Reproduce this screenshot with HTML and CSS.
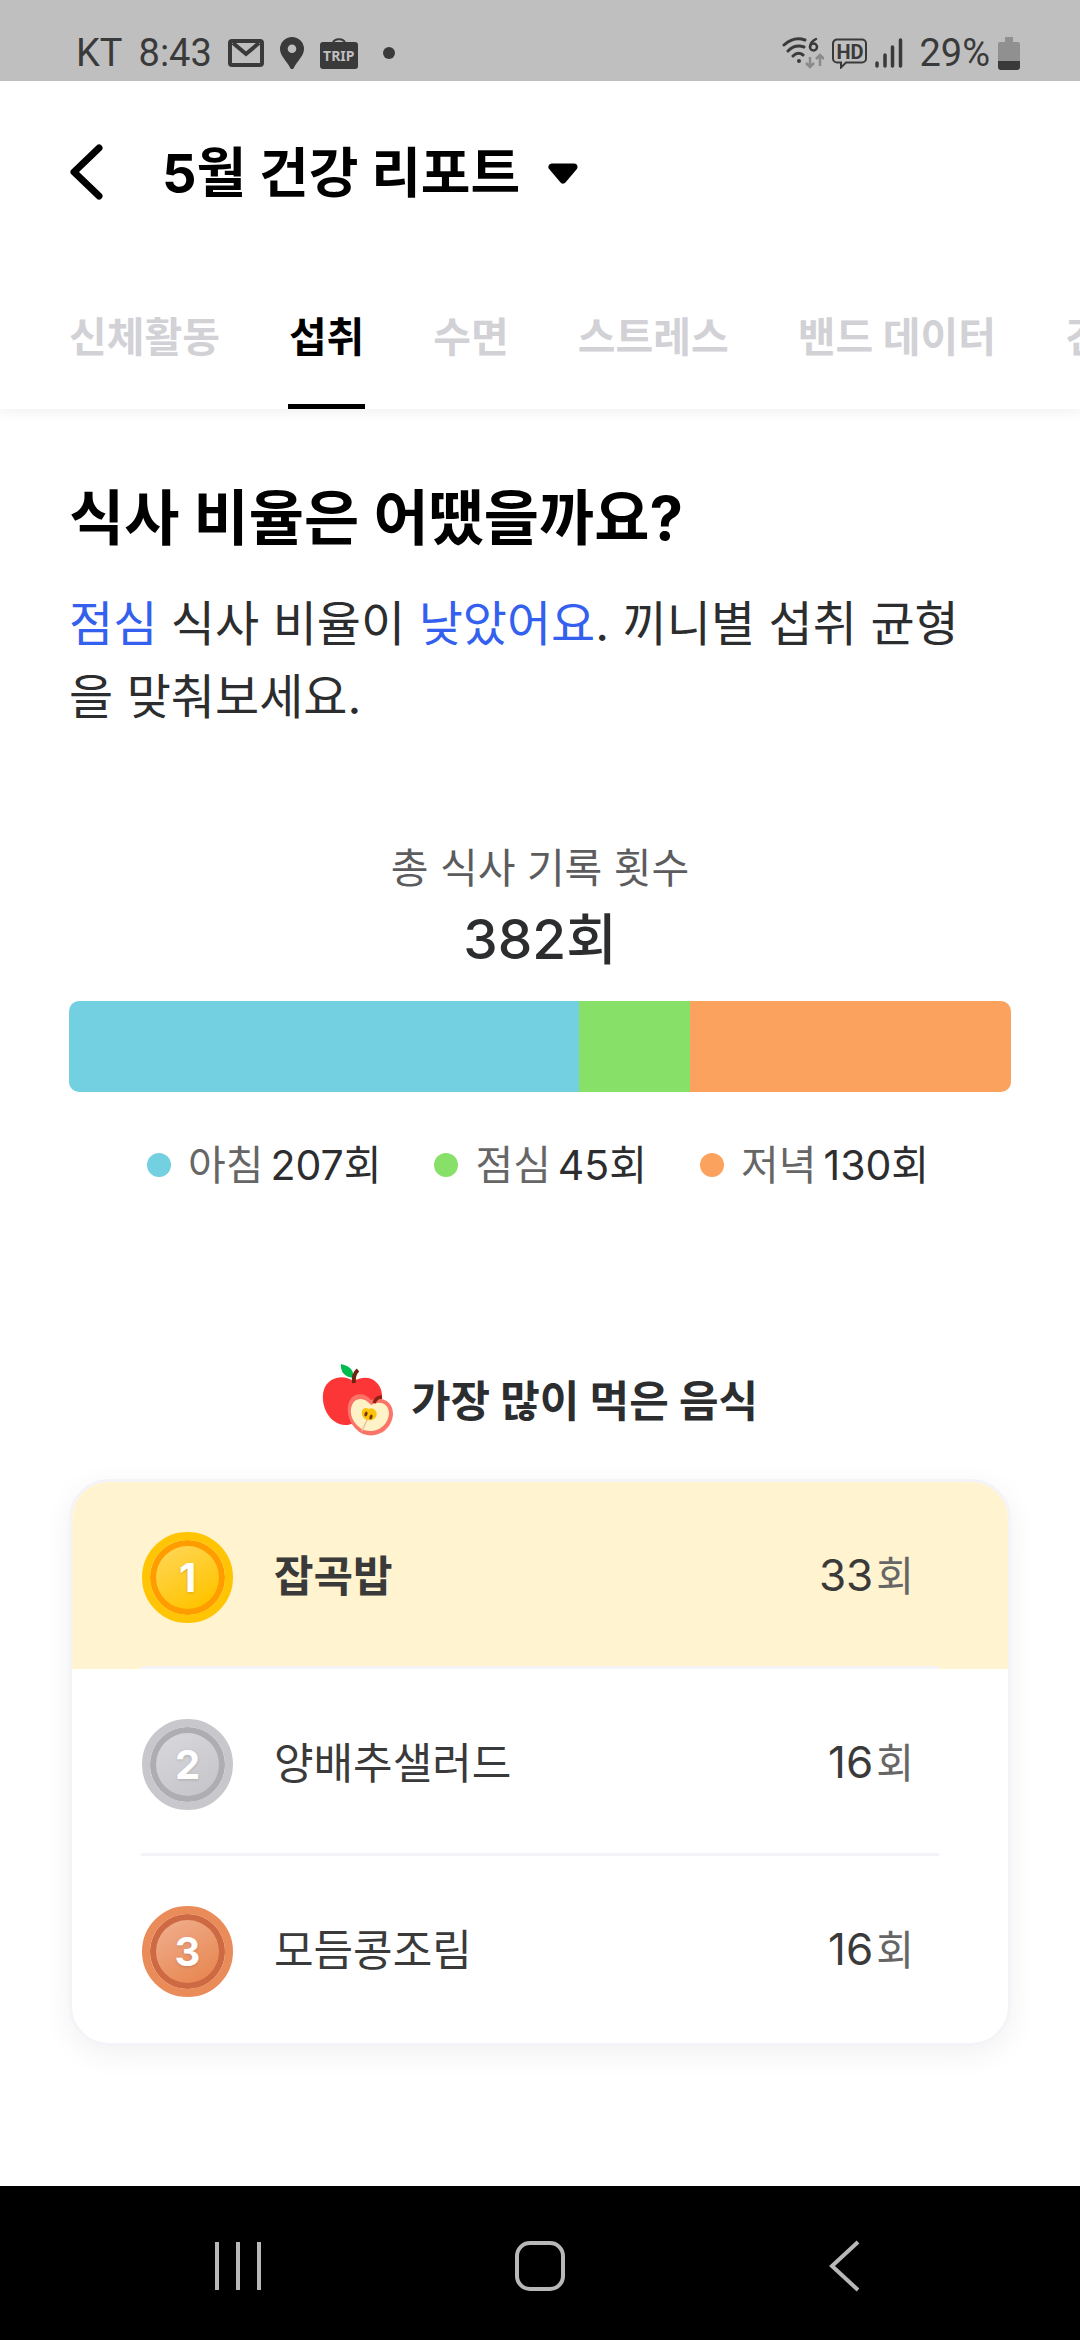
FILE: index.html
```html
<!DOCTYPE html>
<html lang="ko">
<head>
<meta charset="utf-8">
<meta name="viewport" content="width=device-width, initial-scale=1">
<title>5월 건강 리포트</title>
<link rel="stylesheet" href="styles.css">
</head>
<body>
<div class="screen">
  <div class="status">
    <div class="status-left">
      <span>KT</span>
      <span>8:43</span>
      <svg class="icon-mail" width="36" height="28" viewBox="0 0 36 28"><rect x="2" y="2" width="32" height="24" rx="2" fill="none" stroke="currentColor" stroke-width="4"/><path d="M5 4l13 11L31 4" fill="none" stroke="currentColor" stroke-width="4"/></svg>
      <svg class="icon-pin" width="24" height="32" viewBox="0 0 24 32"><path fill="currentColor" fill-rule="evenodd" d="M12 0a12 12 0 0 1 12 12c0 7-7 12-10.500 19.500q-1.500 1-3 0C7 24 0 19 0 12A12 12 0 0 1 12 0zm0 7.500a4.300 4.300 0 1 0 0 8.600 4.300 4.300 0 0 0 0-8.600z"/></svg>
      <span class="trip"><svg width="38" height="31" viewBox="0 0 38 31"><path d="M13 5c1-5 11-5 12 0" fill="none" stroke="currentColor" stroke-width="2"/><rect y="4" width="38" height="27" rx="3" fill="currentColor"/></svg><b>TRIP</b></span>
      <span class="more-dot"></span>
    </div>
    <div class="status-right">
      <svg width="42" height="34" viewBox="0 0 42 34" fill="none" stroke="currentColor" stroke-linecap="round"><path stroke-width="3" d="M2 9Q12 0 23 4M6 15q7-7 16-4M11 20q5-5 10-1"/><circle cx="17" cy="25" r="2" fill="currentColor" stroke="none"/><path stroke-width="2.500" d="M34 3q-6 3-6 8"/><circle cx="31.500" cy="11" r="3.500" stroke-width="2.500"/><g stroke="#8a8a8a" stroke-width="2.500" stroke-linecap="butt"><path d="M28 21v10M24 27l4 4 4-4M38 30V19M34 23l4-4 4 4"/></g></svg>
      <span class="hd"><svg width="35" height="31" viewBox="0 0 35 31"><path d="M5 1.500h25a4 4 0 0 1 4 4v15a4 4 0 0 1-4 4H14l-5 5v-5H5a4 4 0 0 1-4-4v-15a4 4 0 0 1 4-4z" fill="none" stroke="currentColor" stroke-width="2"/></svg><b>HD</b></span>
      <svg width="28" height="30" viewBox="0 0 28 30" stroke="currentColor" stroke-width="3.500" stroke-linecap="round"><path d="M2 25v3M10 17v11M17.500 9v19M25.500 2v26"/></svg>
      <span class="percent">29%</span>
      <svg width="22" height="33" viewBox="0 0 22 33"><path fill="#909090" d="M7 0h8v5h5a2 2 0 0 1 2 2v18H0V7a2 2 0 0 1 2-2h5z"/><path fill="currentColor" d="M0 24h22v6a3 3 0 0 1-3 3H3a3 3 0 0 1-3-3z"/></svg>
    </div>
  </div>

  <header class="header">
    <button class="back" aria-label="뒤로"><svg width="34" height="56" viewBox="0 0 34 56"><path d="M29 4L4 28l25 24" fill="none" stroke="#000" stroke-width="7" stroke-linecap="round" stroke-linejoin="round"/></svg></button>
    <button class="month"><h1>5월 건강 리포트</h1><svg width="30" height="22" viewBox="0 0 30 22"><path d="M4 4h22L15 17z" fill="#000" stroke="#000" stroke-width="7" stroke-linejoin="round"/></svg></button>
  </header>

  <nav class="tabs">
    <button>신체활동</button>
    <button class="active" aria-current="page">섭취</button>
    <button>수면</button>
    <button>스트레스</button>
    <button>밴드 데이터</button>
    <button>건강</button>
  </nav>

  <main class="content">
    <h2>식사 비율은 어땠을까요?</h2>
    <p class="summary"><em>점심</em> 식사 비율이 <em>낮았어요</em>. 끼니별 섭취 균형을 맞춰보세요.</p>

    <section class="ratio">
      <p class="total-label">총 식사 기록 횟수</p>
      <p class="total">382회</p>
      <div class="bar">
        <span class="breakfast" style="flex-grow: 207"></span>
        <span class="lunch" style="flex-grow: 45"></span>
        <span class="dinner" style="flex-grow: 130"></span>
      </div>
      <ul class="legend">
        <li><i class="breakfast"></i>아침<b>207회</b></li>
        <li><i class="lunch"></i>점심<b>45회</b></li>
        <li><i class="dinner"></i>저녁<b>130회</b></li>
      </ul>
    </section>

    <section class="foods">
      <h3>
        <svg width="72" height="76" viewBox="0 0 72 76"><path fill="#fc3636" d="M31 18C22 11 8 14 3 24c-5 11-1 27 9 34 6 5 14 5 20 2 10 4 20-2 25-13 5-10 4-22-3-28-6-6-15-5-23-1z"/><path fill="#00bb50" d="M19 1q14 3 12 14Q18 13 19 1z"/><path d="M32 20Q31 11 36 7" fill="none" stroke="#70240e" stroke-width="4"/><path fill="#fb7468" d="M49 37c-6-8-18-8-22 2-4 12 2 26 14 32 14 5 29-4 30-20 0-12-10-18-22-14z"/><path fill="#fff2c6" d="M49 42c-6-8-16-8-19 0-4 10 3 21 12 25 12 4 24-4 25-16 0-10-8-14-18-9z"/><path d="M46 55q-4 8-6 13" stroke="#ecc19a" stroke-width="1.500" fill="none"/><path fill="#fcc30a" d="M47 46c-7-4-10 6-4 10 8 4 15-3 10-9q-3-3-6-1z"/><g fill="#72350c"><ellipse cx="44" cy="51" rx="1.500" ry="2.500" transform="rotate(20 44 51)"/><ellipse cx="49" cy="54" rx="1.500" ry="2.500" transform="rotate(20 49 54)"/></g><path d="M52 40q2-6 8-6" fill="none" stroke="#8c2316" stroke-width="3.500"/></svg>
        가장 많이 먹은 음식
      </h3>
      <ol class="ranking">
        <li class="first"><span class="medal gold">1</span><span class="name">잡곡밥</span><span class="count">33<small>회</small></span></li>
        <li><span class="medal silver">2</span><span class="name">양배추샐러드</span><span class="count">16<small>회</small></span></li>
        <li><span class="medal bronze">3</span><span class="name">모듬콩조림</span><span class="count">16<small>회</small></span></li>
      </ol>
    </section>
  </main>

  <nav class="system">
    <button aria-label="최근 앱"><svg width="48" height="50" viewBox="0 0 48 50"><path d="M3 1v48M24 1v48M45 1v48" stroke="#b8b8b8" stroke-width="4"/></svg></button>
    <button aria-label="홈"><svg width="52" height="52" viewBox="0 0 52 52"><rect x="3" y="3" width="46" height="46" rx="13" fill="none" stroke="#b8b8b8" stroke-width="4"/></svg></button>
    <button aria-label="뒤로 가기"><svg width="48" height="52" viewBox="0 0 48 52"><path d="M40 2L14 26l26 24" fill="none" stroke="#b8b8b8" stroke-width="4"/></svg></button>
  </nav>
</div>
</body>
</html>
```
FILE: styles.css
```css
* { box-sizing: border-box; margin: 0; padding: 0; }
body {
  background: #fff;
  color: #2c2d2f;
  font-family: Inter, "Noto Sans CJK KR", sans-serif;
}
button { border: 0; background: none; font: inherit; color: inherit; }
svg { display: block; flex: none; }
ul, ol { list-style: none; }
.screen { min-height: 100vh; display: flex; flex-direction: column; overflow: hidden; }

.status {
  height: 81px;
  padding: 25px 60px 0 76px;
  display: flex;
  justify-content: space-between;
  background: #bfbfbf;
  color: #3a3a3a;
  font: 38px/56px Roboto, sans-serif;
}
.status-left, .status-right { display: flex; align-items: center; height: 56px; }
.status-left { gap: 16px; }
.status-right { gap: 8px; }
.trip, .hd { position: relative; }
.trip b, .hd b { position: absolute; left: 0; right: 0; text-align: center; }
.trip b { top: 9px; font: 700 14px/18px "Noto Sans", sans-serif; color: #bfbfbf; }
.hd b { top: 4px; font: 700 20px/20px Roboto, sans-serif; }
.more-dot { width: 12px; height: 12px; margin-left: 9px; border-radius: 50%; background: currentColor; }
.percent { margin-left: 8px; }

.header { height: 182px; padding: 0 70px; display: flex; align-items: center; gap: 58px; }
.month { display: flex; align-items: center; gap: 28px; padding-top: 3px; color: #000; }
h1 { font-size: 54px; line-height: 72px; font-weight: 700; white-space: nowrap; }

.tabs {
  height: 146px;
  padding-left: 68px;
  display: flex;
  gap: 67px;
  overflow: hidden;
  box-shadow: 0 3px 12px rgba(0, 0, 0, .06);
  clip-path: inset(0 0 -20px 0);
}
.tabs button {
  flex: none;
  padding: 0 1px;
  border-bottom: 5px solid transparent;
  font-size: 41px;
  font-weight: 700;
  color: #d1d1d6;
}
.tabs .active { color: #000; border-color: #000; }

.content { flex: 1; padding: 69px 69px 138px; }
h2 { font-size: 60px; line-height: 80px; font-weight: 700; color: #000; }
.summary { margin-top: 29px; padding-right: 30px; font-size: 48px; line-height: 73px; }
.summary em { font-style: normal; color: #3360ee; }

.ratio { margin-top: 105px; text-align: center; }
.total-label { font-size: 41px; line-height: 60px; color: #5c5c5e; }
.total { margin-top: 1px; font-size: 55px; line-height: 80px; font-weight: 500; }
.bar { display: flex; height: 91px; margin-top: 22px; border-radius: 10px; overflow: hidden; }
.bar span { flex-basis: 0; }
.breakfast { background: #72d0e0; }
.lunch { background: #87e168; }
.dinner { background: #fba35e; }
.legend { display: flex; justify-content: center; gap: 53px; margin-top: 43px; padding-right: 4px; font-size: 41px; line-height: 60px; color: #666; }
.legend li { display: flex; align-items: center; }
.legend i { width: 24px; height: 24px; margin-right: 17px; border-radius: 50%; }
.legend b { margin-left: 7px; font-weight: 400; color: #2c2d2f; }

.foods { margin-top: 166px; }
h3 { display: flex; justify-content: center; align-items: center; gap: 17px; font-size: 43px; line-height: 80px; font-weight: 700; }
.ranking {
  margin-top: 38px;
  border: 3px solid #f3f3f8;
  border-radius: 40px;
  overflow: hidden;
  box-shadow: 0 8px 30px rgba(0, 0, 0, .06);
  font-size: 43px;
  color: #3a3a3a;
}
.ranking li {
  height: 187px;
  padding: 3px 94px 0 70px;
  display: flex;
  align-items: center;
  background: linear-gradient(#f3f3f8, #f3f3f8) center bottom / calc(100% - 138px) 3px no-repeat;
}
.ranking li:last-child { background: none; }
.ranking .first { background-color: #fff3d0; }
.name, .count { line-height: 64px; padding-bottom: 3px; }
.name { flex: 1; margin-left: 41px; }
.first .name { font-weight: 700; }
.count { font-size: 44px; }
.count small { margin-left: 3px; font-size: 41px; color: #666; }
.medal {
  width: 91px;
  height: 91px;
  border: 8px solid;
  border-radius: 50%;
  display: grid;
  place-items: center;
  font-size: 40px;
  font-weight: 700;
  color: #fff;
  text-shadow: 0 1px 3px rgba(0, 0, 0, .15);
}
.gold { border-color: #ffc505; background: linear-gradient(150deg, #ffd44d 20%, #ffc400 80%) padding-box; box-shadow: inset 0 0 0 6px #ff9d00; }
.silver { border-color: #c7c7cc; background: linear-gradient(150deg, #d5d5da 20%, #c6c6cb 80%) padding-box; box-shadow: inset 0 0 0 6px #aeaeb2; }
.bronze { border-color: #e98c5a; background: linear-gradient(150deg, #efa985 20%, #e88955 80%) padding-box; box-shadow: inset 0 0 0 6px #cd6943; }

.system { height: 154px; padding: 0 87px; display: flex; background: #000; }
.system button { flex: 1; display: grid; place-items: center; padding-top: 6px; }
```
